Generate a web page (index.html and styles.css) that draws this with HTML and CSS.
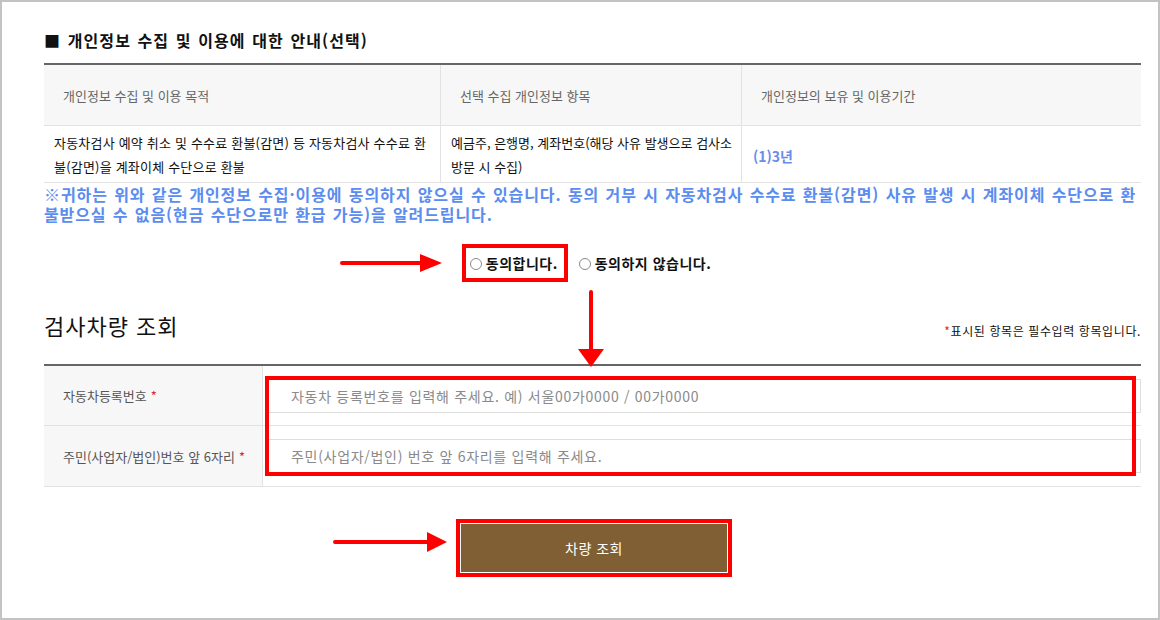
FILE: index.html
```html
<!DOCTYPE html>
<html lang="ko">
<head>
<meta charset="utf-8">
<title>개인정보 수집 및 검사차량 조회</title>
<link rel="stylesheet" href="styles.css">
</head>
<body>
<div class="frame">
  <h2 class="heading">■ 개인정보 수집 및 이용에 대한 안내(선택)</h2>

  <div class="info-table">
    <div class="th">개인정보 수집 및 이용 목적</div>
    <div class="th">선택 수집 개인정보 항목</div>
    <div class="th last">개인정보의 보유 및 이용기간</div>
    <div class="td c1">자동차검사 예약 취소 및 수수료 환불(감면) 등 자동차검사 수수료 환불(감면)을 계좌이체 수단으로 환불</div>
    <div class="td c2">예금주, 은행명, 계좌번호(해당 사유 발생으로 검사소 방문 시 수집)</div>
    <div class="td last c3"><span class="period">(1)3년</span></div>
  </div>

  <p class="notice">※귀하는 위와 같은 개인정보 수집·이용에 동의하지 않으실 수 있습니다. 동의 거부 시 자동차검사 수수료 환불(감면) 사유 발생 시 계좌이체 수단으로 환불받으실 수 없음(현금 수단으로만 환급 가능)을 알려드립니다.</p>

  <div class="agree-row">
    <label class="radio marked"><span class="circle"></span><span>동의합니다.</span></label>
    <label class="radio"><span class="circle"></span><span>동의하지 않습니다.</span></label>
  </div>

  <div class="section-head">
    <h3 class="title">검사차량 조회</h3>
    <p class="req-note"><span class="star">*</span>표시된 항목은 필수입력 항목입니다.</p>
  </div>

  <div class="form-table">
    <div class="label"><span>자동차등록번호</span><span class="star">*</span></div>
    <div class="field"><input class="text-input" type="text" placeholder="자동차 등록번호를 입력해 주세요. 예) 서울00가0000 / 00가0000"></div>
    <div class="label last-row"><span>주민(사업자/법인)번호 앞 6자리</span><span class="star">*</span></div>
    <div class="field last-row"><input class="text-input" type="text" placeholder="주민(사업자/법인) 번호 앞 6자리를 입력해 주세요."></div>
    <div class="mark-box"></div>
  </div>

  <div class="btn-row">
    <button class="search-btn" type="button">차량 조회</button>
  </div>

  <svg class="arrow arrow-right-1" width="106" height="20" viewBox="0 0 106 20"><line x1="4" y1="10" x2="84" y2="10" stroke="#ff0000" stroke-width="4" stroke-linecap="round"/><polygon points="82,1 104,10 82,19" fill="#ff0000"/></svg>
  <svg class="arrow arrow-down" width="28" height="80" viewBox="0 0 28 80"><line x1="14" y1="3" x2="14" y2="62" stroke="#ff0000" stroke-width="4" stroke-linecap="round"/><polygon points="1,60 27,60 14,78" fill="#ff0000"/></svg>
  <svg class="arrow arrow-right-2" width="118" height="22" viewBox="0 0 118 22"><line x1="4" y1="11" x2="98" y2="11" stroke="#ff0000" stroke-width="4" stroke-linecap="round"/><polygon points="96,1 116,11 96,21" fill="#ff0000"/></svg>
</div>
</body>
</html>
```

FILE: styles.css
```css
* { box-sizing: border-box; }
html, body { margin: 0; padding: 0; background: #fff; }
body {
  font-family: "Noto Sans CJK KR", "Noto Sans", "Liberation Sans", sans-serif;
  color: #222;
}
.frame {
  position: relative;
  width: 1160px;
  height: 620px;
  border: 2px solid #c3c3c3;
  padding: 0 17px 0 42px;
  overflow: hidden;
}
.heading {
  margin: 26px 0 0;
  font-size: 16px;
  line-height: 24px;
  font-weight: 700;
  color: #111;
  letter-spacing: 1.1px;
  word-spacing: 1px;
}
.info-table {
  margin-top: 11px;
  display: grid;
  grid-template-columns: 397px 301px 1fr;
  border-top: 2px solid #666;
}
.th {
  height: 61px;
  background: #f7f7f7;
  border-bottom: 1px solid #e2e2e2;
  border-right: 1px solid #e2e2e2;
  padding-left: 19px;
  display: flex;
  align-items: center;
  font-size: 13px;
  color: #666;
}
.td {
  height: 57px;
  border-bottom: 1px solid #e2e2e2;
  border-right: 1px solid #e2e2e2;
  padding: 2px 10px 0 10px;
  display: flex;
  align-items: center;
  font-size: 13px;
  line-height: 24px;
  color: #111;
}
.th.last, .td.last { border-right: 0; }
.c1 { word-break: break-all; letter-spacing: 0.2px; }
.c2 { word-break: keep-all; letter-spacing: 0; padding-right: 4px; }
.c3 { padding-left: 11px; padding-top: 4px; }
.period { color: #6b8ce8; font-weight: 700; font-size: 14px; }
.notice {
  margin: 1px 0 0;
  font-size: 16px;
  line-height: 20px;
  font-weight: 700;
  color: #5b8cef;
  word-break: break-all;
  letter-spacing: 0.9px;
  word-spacing: 1px;
}
.agree-row {
  margin-top: 20px;
  height: 38px;
  display: flex;
  justify-content: center;
  align-items: center;
  gap: 11px;
  padding-right: 12px;
}
.radio {
  display: flex;
  align-items: center;
  font-size: 14px;
  font-weight: 700;
  color: #111;
  height: 38px;
  letter-spacing: 0.5px;
}
.radio.marked {
  border: 4px solid #ff0000;
  padding: 0 6px 0 4px;
}
.circle {
  width: 12px;
  height: 12px;
  border: 1px solid #8a8a8a;
  border-radius: 50%;
  margin-right: 4px;
  margin-top: 2px;
  background: #fff;
}
.section-head {
  margin-top: 28px;
  display: flex;
  justify-content: space-between;
  align-items: flex-end;
}
.title {
  margin: 0;
  font-size: 22px;
  line-height: 30px;
  font-weight: 400;
  color: #111;
  letter-spacing: 1px;
}
.req-note {
  margin: 0 0 1px;
  font-size: 12px;
  line-height: 16px;
  color: #111;
  letter-spacing: 0.6px;
}
.star { color: #e0262e; }
.label .star { margin-left: 4px; }
.form-table {
  position: relative;
  margin-top: 24px;
  display: grid;
  grid-template-columns: 219px 1fr;
  border-top: 2px solid #666;
}
.label {
  height: 60px;
  background: #f7f7f7;
  border-right: 1px solid #e2e2e2;
  border-bottom: 1px solid #e2e2e2;
  padding-left: 19px;
  display: flex;
  align-items: center;
  font-size: 13px;
  color: #555;
}
.field {
  height: 60px;
  border-bottom: 1px solid #e2e2e2;
  padding-left: 5px;
  display: flex;
  align-items: center;
}
.label.last-row, .field.last-row { height: 61px; }
.text-input {
  width: 100%;
  height: 34px;
  border: 1px solid #dedede;
  padding: 0 0 0 22px;
  font-family: inherit;
  font-size: 14px;
  letter-spacing: 0.7px;
  color: #333;
  background: #fff;
  outline: none;
}
.text-input::placeholder { color: #8a8a8a; }
.mark-box {
  position: absolute;
  left: 221px;
  top: 10px;
  width: 871px;
  height: 100px;
  border: 4px solid #ff0000;
  pointer-events: none;
}
.btn-row {
  margin-top: 37px;
  display: flex;
  justify-content: center;
  padding-left: 3px;
}
.search-btn {
  width: 266px;
  height: 48px;
  background: #7f5f33;
  border: 0;
  color: #fff;
  font-family: inherit;
  font-size: 14px;
  letter-spacing: 0.5px;
  outline: 4px solid #ff0000;
  outline-offset: 1px;
}
.arrow { position: absolute; }
.arrow-right-1 { left: 336px; top: 251px; }
.arrow-down { left: 575px; top: 287px; }
.arrow-right-2 { left: 329px; top: 529px; }
```
